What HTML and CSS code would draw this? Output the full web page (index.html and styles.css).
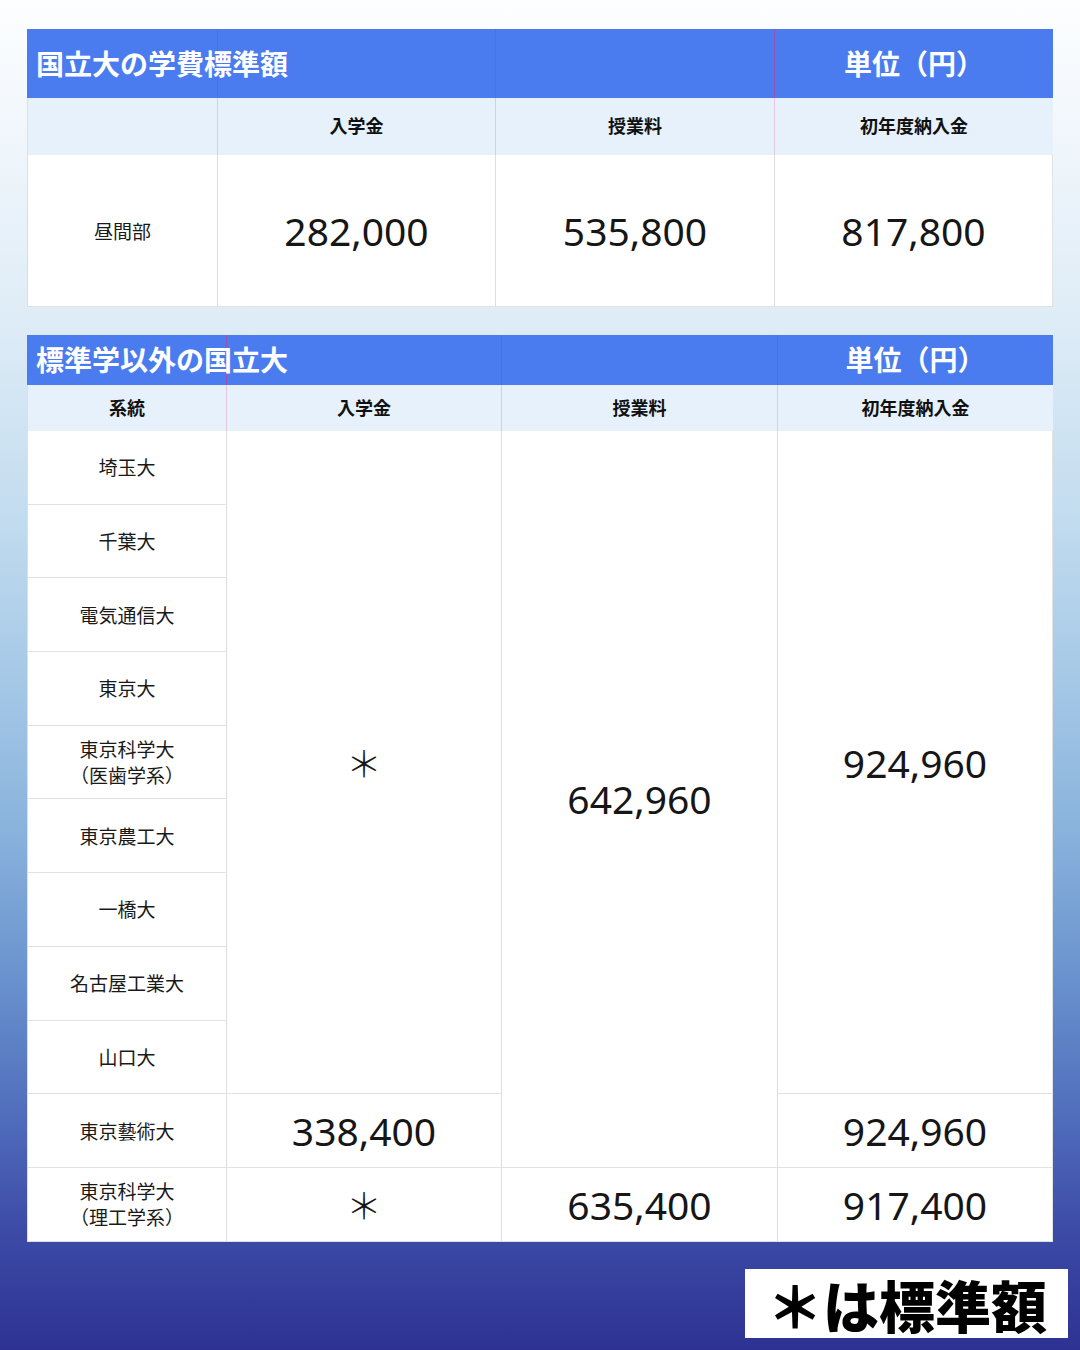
FILE: index.html
```html
<!DOCTYPE html>
<html lang="ja">
<head>
<meta charset="utf-8">
<title>国立大の学費標準額</title>
<link rel="stylesheet" href="styles.css">
</head>
<body>
<div class="page">
  <table class="fees fees-std">
    <colgroup>
      <col class="c1a"><col class="c2a"><col class="c3a"><col class="c4a">
    </colgroup>
    <tr class="head">
      <td class="title">国立大の学費標準額</td>
      <td></td>
      <td></td>
      <td class="unit">単位（円）</td>
    </tr>
    <tr class="sub">
      <td></td>
      <td>入学金</td>
      <td>授業料</td>
      <td>初年度納入金</td>
    </tr>
    <tr class="row-big">
      <td class="label">昼間部</td>
      <td class="num">282,000</td>
      <td class="num">535,800</td>
      <td class="num">817,800</td>
    </tr>
  </table>

  <table class="fees fees-other">
    <colgroup>
      <col class="c1b"><col class="c2b"><col class="c3b"><col class="c4b">
    </colgroup>
    <tr class="head head-sm">
      <td class="title">標準学以外の国立大</td>
      <td></td>
      <td></td>
      <td class="unit">単位（円）</td>
    </tr>
    <tr class="sub sub-sm">
      <td>系統</td>
      <td>入学金</td>
      <td>授業料</td>
      <td>初年度納入金</td>
    </tr>
    <tr class="row">
      <td class="label">埼玉大</td>
      <td class="num star" rowspan="9">＊</td>
      <td class="num" rowspan="10">642,960</td>
      <td class="num last" rowspan="9">924,960</td>
    </tr>
    <tr class="row"><td class="label">千葉大</td></tr>
    <tr class="row"><td class="label">電気通信大</td></tr>
    <tr class="row"><td class="label">東京大</td></tr>
    <tr class="row"><td class="label two">東京科学大<br>（医歯学系）</td></tr>
    <tr class="row"><td class="label">東京農工大</td></tr>
    <tr class="row"><td class="label">一橋大</td></tr>
    <tr class="row"><td class="label">名古屋工業大</td></tr>
    <tr class="row"><td class="label">山口大</td></tr>
    <tr class="row">
      <td class="label">東京藝術大</td>
      <td class="num">338,400</td>
      <td class="num last">924,960</td>
    </tr>
    <tr class="row">
      <td class="label two">東京科学大<br>（理工学系）</td>
      <td class="num star">＊</td>
      <td class="num">635,400</td>
      <td class="num last">917,400</td>
    </tr>
  </table>

  <div class="note-wrap">
    <div class="note">＊は標準額</div>
  </div>
</div>
</body>
</html>
```

FILE: styles.css
```css
html, body {
  margin: 0;
  padding: 0;
}

body {
  width: 1080px;
  height: 1350px;
  overflow: hidden;
  font-family: "Noto Sans CJK JP", "Noto Sans", sans-serif;
  color: #141414;
  background: linear-gradient(180deg,
    #fdfeff 0%,
    #eef5fb 12%,
    #dcebf6 25%,
    #c3dcef 38%,
    #a6c9e7 50%,
    #88b2dc 62%,
    #6890cd 73%,
    #4f6cbb 83%,
    #3d4ba7 91%,
    #2d3292 100%);
}

.page {
  padding: 29px 27px 0 27px;
}

.fees {
  width: 1026px;
  table-layout: fixed;
  border-collapse: separate;
  border-spacing: 0;
  background: #ffffff;
}

.fees td {
  padding: 0;
  text-align: center;
  vertical-align: middle;
  border-left: 1px solid #dedede;
  border-bottom: 1px solid #e2e2e2;
  white-space: nowrap;
}

.c1a { width: 190px; }
.c2a { width: 278px; }
.c3a { width: 279px; }
.c4a { width: 279px; }

.c1b { width: 199px; }
.c2b { width: 275px; }
.c3b { width: 276px; }
.c4b { width: 276px; }

.fees-std {
  margin-bottom: 28px;
}

/* header row */
.head td {
  background: #4a7cf0;
  border-bottom: none;
  border-left: 1px solid rgba(200, 60, 140, 0.6);
  color: #ffffff;
  font-weight: 700;
  font-size: 28px;
  overflow: visible;
}

.head td:first-child {
  border-left: none;
}

.head {
  height: 69px;
}

.head-sm {
  height: 50px;
}

.head .title {
  text-align: left;
  padding-left: 9px;
  padding-bottom: 2px;
}

.head .unit {
  text-align: center;
  padding-bottom: 2px;
}

/* sub-header row */
.sub td {
  background: #e6f1fc;
  border-bottom: none;
  border-left: 1px solid rgba(224, 140, 185, 0.4);
  font-weight: 700;
  font-size: 18px;
  color: #111111;
  padding-bottom: 3px;
}

.sub td:first-child {
  border-left: 1px solid rgba(200, 200, 210, 0.4);
}

.sub {
  height: 57px;
}

.sub-sm {
  height: 46px;
}

/* body rows */
.row-big {
  height: 152px;
}

.row {
  height: 73.7px;
}

.label {
  font-size: 19px;
  font-weight: 400;
  line-height: 26px;
  color: #1a1a1a;
}

.num {
  font-family: "Noto Sans", "Noto Sans CJK JP", sans-serif;
  font-size: 39px;
  font-weight: 400;
  color: #161616;
}

.star {
  font-family: "Noto Sans CJK JP", sans-serif;
  font-weight: 300;
  font-size: 36px;
}

.fees td.last,
.fees-std .row-big td:last-child {
  border-right: 1px solid #e2e2e2;
}

/* note */
.note-wrap {
  display: flex;
  justify-content: flex-end;
  padding-top: 27px;
  margin-right: -15px;
}

.note {
  background: #ffffff;
  color: #000000;
  font-family: "Noto Sans CJK JP", sans-serif;
  font-weight: 900;
  font-size: 56px;
  line-height: 69px;
  height: 69px;
  padding: 0 21px 0 22px;
}
```
